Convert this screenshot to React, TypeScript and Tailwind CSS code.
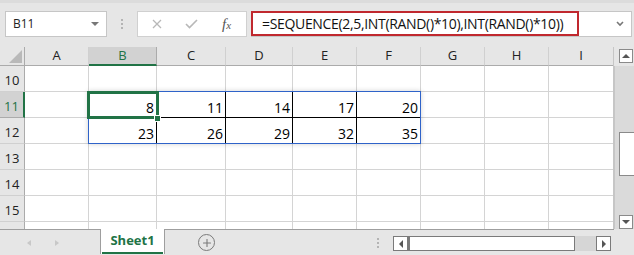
import { Plus } from "lucide-react";

const COLS = ["A", "B", "C", "D", "E", "F", "G", "H", "I"];
const ROWS = [10, 11, 12, 13, 14, 15, 16];

// spill result of =SEQUENCE(2,5,8,3)
const DATA: Record<number, number[]> = {
  11: [8, 11, 14, 17, 20],
  12: [23, 26, 29, 32, 35],
};

function cellValue(row: number, col: number) {
  const vals = DATA[row];
  if (!vals || col < 1 || col > 5) return null;
  return vals[col - 1];
}

function inSpill(row: number, col: number) {
  return (row === 11 || row === 12) && col >= 1 && col <= 5;
}

export default function App() {
  return (
    <div className="w-[634px] h-[255px] bg-[#e6e6e6] flex flex-col overflow-hidden font-['Open_Sans',sans-serif] select-none">
      {/* formula bar */}
      <div className="h-[47px] flex items-start pt-[11px] pl-[5px] border-t-[3px] border-[#dcdcdc]">
        <div className="w-[102px] h-[26px] -mt-[3px] bg-white border border-[#c6c6c6] flex items-center pl-[7px] pr-[7px]">
          <span className="text-[12px] text-[#222]">B11</span>
          <span className="ml-auto w-0 h-0 border-l-[4px] border-r-[4px] border-t-[4px] border-l-transparent border-r-transparent border-t-[#777]" />
        </div>

        <div className="ml-[14px] mt-[5px] flex flex-col gap-[2px]">
          <span className="w-[2px] h-[2px] bg-[#b4b4b4]" />
          <span className="w-[2px] h-[2px] bg-[#b4b4b4]" />
          <span className="w-[2px] h-[2px] bg-[#b4b4b4]" />
        </div>

        <div className="ml-[14px] -mt-[3px] w-[110px] h-[26px] bg-white border border-[#d0d0d0] flex items-center">
          <svg width="10" height="10" viewBox="0 0 10 10" className="ml-[14px]">
            <path d="M1 1 L9 9 M9 1 L1 9" stroke="#b8b8b8" strokeWidth="1.3" fill="none" />
          </svg>
          <svg width="13" height="10" viewBox="0 0 13 10" className="ml-[23px]">
            <path d="M1 5 L4.5 8.5 L12 1" stroke="#b8b8b8" strokeWidth="1.6" fill="none" />
          </svg>
          <span className="ml-[24px] font-['Liberation_Serif',serif] italic text-[15px] text-[#555] leading-none">
            f<span className="text-[11px]">x</span>
          </span>
        </div>

        <div className="ml-[4px] -mt-[3px] w-[381px] h-[26px] bg-white border border-[#c6c6c6] flex items-stretch">
          <div className="w-[328px] -ml-px -mt-px h-[25px] border-2 border-[#c0282e] flex items-center pl-[9px]">
            <span className="text-[14px] text-[#111] whitespace-nowrap tracking-[-0.33px]">
              =SEQUENCE(2,5,INT(RAND()*10),INT(RAND()*10))
            </span>
          </div>
          <div className="ml-auto mr-[7px] flex items-center">
            <svg width="8" height="6" viewBox="0 0 8 6">
              <path d="M1 1 L4 4 L7 1" stroke="#777" strokeWidth="1.6" fill="none" />
            </svg>
          </div>
        </div>
      </div>

      {/* sheet */}
      <div className="flex h-[182px]">
        <div className="relative w-[614px] h-[182px] overflow-hidden bg-white">
          <div className="grid grid-cols-[25px_64px_68px_69px_67px_64px_64px_64px_64px_65px] grid-rows-[19px_repeat(7,26px)]">
            {/* select-all corner */}
            <div className="bg-[#e6e6e6] border-r border-b border-[#ababab] relative">
              <svg width="13" height="13" viewBox="0 0 13 13" className="absolute right-[2px] bottom-[2px]">
                <path d="M13 0 L13 13 L0 13 Z" fill="#b9b9b9" />
              </svg>
            </div>
            {COLS.map((c) => (
              <div
                key={c}
                className={
                  c === "B"
                    ? "bg-[#d2d2d2] border-r border-[#ababab] border-b-2 border-b-[#217346] flex items-center justify-center text-[13px] text-[#217346]"
                    : "bg-[#e6e6e6] border-r border-b border-[#d0d0d0] border-b-[#ababab] flex items-center justify-center text-[13px] text-[#222]"
                }
              >
                {c}
              </div>
            ))}

            {ROWS.map((r) => (
              <div key={r} className="contents">
                <div
                  className={
                    r === 11
                      ? "bg-[#d2d2d2] border-r-2 border-r-[#217346] border-b border-[#ababab] flex items-end justify-center pb-[1px] text-[13px] text-[#217346]"
                      : "bg-[#e6e6e6] border-r border-b border-[#ababab] border-b-[#d0d0d0] flex items-end justify-center pb-[1px] text-[13px] text-[#222]"
                  }
                >
                  {r < 16 ? r : null}
                </div>
                {COLS.map((c, ci) => {
                  const v = cellValue(r, ci);
                  return (
                    <div
                      key={c}
                      className={
                        inSpill(r, ci)
                          ? "border-r border-b border-black flex items-end justify-end pr-[2px] text-[14px] leading-[19px] text-black"
                          : "border-r border-b border-[#d4d4d4] flex items-end justify-end pr-[2px] text-[14px] leading-[19px] text-black"
                      }
                    >
                      {v}
                    </div>
                  );
                })}
              </div>
            ))}
          </div>

          {/* spill range outline */}
          <div className="absolute left-[88px] top-[44px] w-[333px] h-[53px] border border-[#2f63c9] shadow-[0_0_5px_rgba(0,0,0,0.18)]" />
          {/* active cell */}
          <div className="absolute left-[87px] top-[44px] w-[72px] h-[28px] border-[3px] border-[#217346]" />
          <div className="absolute left-[154px] top-[68px] w-[7px] h-[7px] bg-[#217346] border border-white" />
          {/* grid right edge */}
          <div className="absolute right-0 top-0 w-px h-full bg-[#c6c6c6]" />
        </div>

        {/* vertical scrollbar */}
        <div className="w-[20px] flex flex-col">
          <div className="h-[19px] bg-[#e6e6e6] pl-[5px] pr-px pt-[2px]">
            <div className="w-[14px] h-[14px] bg-white border border-[#8a8a8a] flex items-center justify-center">
              <span className="w-0 h-0 border-l-[4px] border-r-[4px] border-b-[4px] border-l-transparent border-r-transparent border-b-[#555]" />
            </div>
          </div>
          <div className="flex-1 bg-[#dadada] border-l border-[#c6c6c6] pl-[4px] flex flex-col">
            <div className="mt-[66px] h-[44px] bg-white border border-[#8a8a8a] border-r-0" />
            <div className="mt-auto w-[14px] h-[14px] bg-white border border-[#8a8a8a] flex items-center justify-center">
              <span className="w-0 h-0 border-l-[4px] border-r-[4px] border-t-[4px] border-l-transparent border-r-transparent border-t-[#555]" />
            </div>
          </div>
        </div>
      </div>

      {/* sheet tabs */}
      <div className="h-[26px] flex items-start">
        <div className="w-[614px] h-full border-t border-[#9e9e9e] flex items-start">
          <div className="w-[100px] h-full flex items-center">
            <span className="ml-[27px] w-0 h-0 border-t-[3px] border-b-[3px] border-r-[4px] border-t-transparent border-b-transparent border-r-[#c8c8c8]" />
            <span className="ml-[24px] w-0 h-0 border-t-[3px] border-b-[3px] border-l-[4px] border-t-transparent border-b-transparent border-l-[#c8c8c8]" />
          </div>
          <div className="-mt-px w-[65px] h-[25px] bg-white border-l border-r border-[#9e9e9e] flex flex-col">
            <div className="flex-1 flex items-center justify-center text-[13px] font-bold text-[#217346]">
              Sheet1
            </div>
            <div className="h-[2px] bg-[#217346] mx-px" />
          </div>
          <div className="ml-[33px] mt-[4px] w-[17px] h-[17px] rounded-full border-[1.5px] border-[#7a7a7a] flex items-center justify-center">
            <Plus size={12} strokeWidth={2.2} color="#7a7a7a" />
          </div>
          <div className="ml-[162px] mt-[8px] flex flex-col gap-[2px]">
            <span className="w-[2px] h-[2px] bg-[#b4b4b4]" />
            <span className="w-[2px] h-[2px] bg-[#b4b4b4]" />
            <span className="w-[2px] h-[2px] bg-[#b4b4b4]" />
          </div>
          <div className="ml-[14px] mt-[6px] h-[15px] flex">
            <div className="w-[15px] h-[15px] bg-white border border-[#7a7a7a] flex items-center justify-center">
              <span className="w-0 h-0 border-t-[4px] border-b-[4px] border-r-[4px] border-t-transparent border-b-transparent border-r-[#555]" />
            </div>
            <div className="w-[167px] h-[15px] bg-white border border-l-2 border-[#7a7a7a]" />
            <div className="w-[21px] h-[15px] bg-[#d6d6d6]" />
            <div className="w-[15px] h-[15px] bg-white border border-[#7a7a7a] flex items-center justify-center">
              <span className="w-0 h-0 border-t-[4px] border-b-[4px] border-l-[4px] border-t-transparent border-b-transparent border-l-[#555]" />
            </div>
          </div>
        </div>
      </div>
    </div>
  );
}
